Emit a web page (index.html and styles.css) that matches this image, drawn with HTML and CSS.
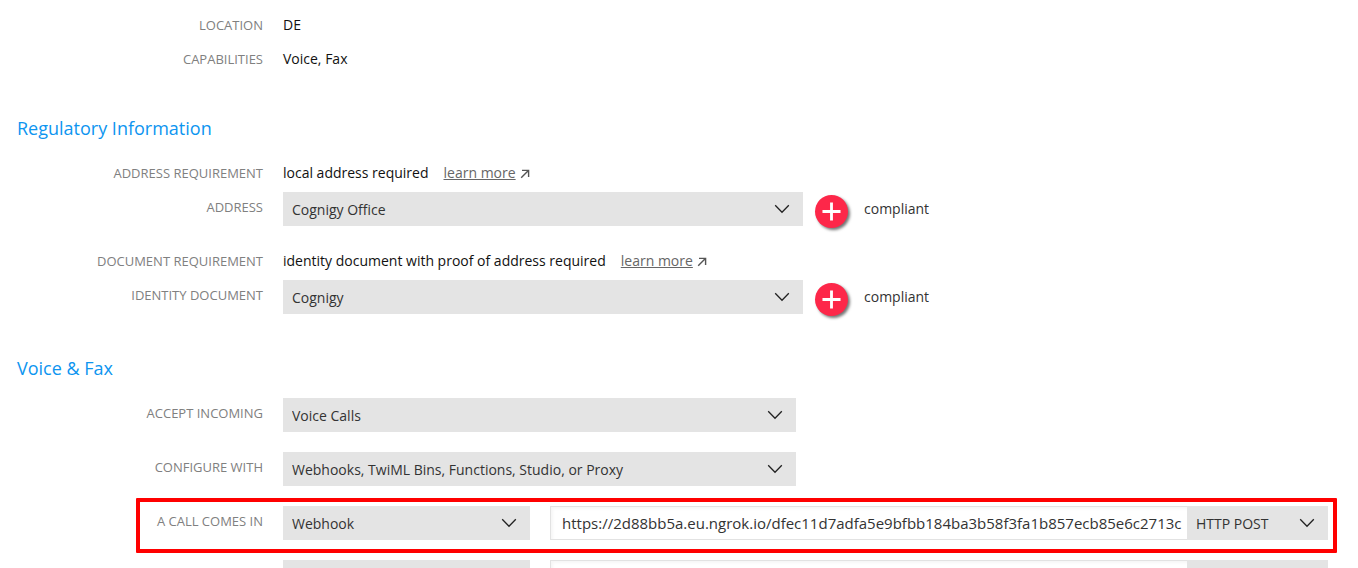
FILE: index.html
```html
<!DOCTYPE html>
<html lang="en">
<head>
<meta charset="utf-8">
<meta name="viewport" content="width=device-width, initial-scale=1">
<title>Phone number configuration</title>
<link rel="stylesheet" href="styles.css">
</head>
<body>
<svg class="sprite" aria-hidden="true">
  <symbol id="chevron" viewBox="0 0 16 10"><path d="M1.2 1.3 8 8.2 14.8 1.3" fill="none" stroke="#222" stroke-width="1.3"/></symbol>
  <symbol id="external" viewBox="0 0 10 10"><path d="M1.2 8.8 8.4 1.6M2 1.4H8.6V8" fill="none" stroke="#555" stroke-width="1.4"/></symbol>
  <symbol id="plus" viewBox="0 0 20 20"><path d="M10 .5V19.500M.5 10H19.500" fill="none" stroke="#fff" stroke-width="3"/></symbol>
</svg>
<main class="page">
  <section class="section">
    <div class="row"><span class="label">LOCATION</span><span class="value">DE</span></div>
    <div class="row row-after-text"><span class="label">CAPABILITIES</span><span class="value">Voice, Fax</span></div>
  </section>

  <section class="section">
    <h2 class="heading">Regulatory Information</h2>
    <div class="row">
      <span class="label">ADDRESS REQUIREMENT</span>
      <div class="value">local address required<a class="more" href="#">learn more</a><svg class="external"><use href="#external"/></svg></div>
    </div>
    <div class="row row-after-text">
      <label class="label" for="address">ADDRESS</label>
      <div class="line">
        <div class="picker picker-long"><select id="address"><option>Cognigy Office</option></select><svg class="chevron"><use href="#chevron"/></svg></div>
        <button class="add" type="button" aria-label="Add address"><svg class="plus"><use href="#plus"/></svg></button>
        <span class="status">compliant</span>
      </div>
    </div>
    <div class="row row-spaced">
      <span class="label">DOCUMENT REQUIREMENT</span>
      <div class="value">identity document with proof of address required<a class="more" href="#">learn more</a><svg class="external"><use href="#external"/></svg></div>
    </div>
    <div class="row row-after-text">
      <label class="label" for="identity">IDENTITY DOCUMENT</label>
      <div class="line">
        <div class="picker picker-long"><select id="identity"><option>Cognigy</option></select><svg class="chevron"><use href="#chevron"/></svg></div>
        <button class="add" type="button" aria-label="Add identity document"><svg class="plus"><use href="#plus"/></svg></button>
        <span class="status">compliant</span>
      </div>
    </div>
  </section>

  <section class="section">
    <h2 class="heading">Voice &amp; Fax</h2>
    <div class="row">
      <label class="label" for="accept">ACCEPT INCOMING</label>
      <div class="picker picker-medium"><select id="accept"><option>Voice Calls</option></select><svg class="chevron"><use href="#chevron"/></svg></div>
    </div>
    <div class="row row-spaced">
      <label class="label" for="configure">CONFIGURE WITH</label>
      <div class="picker picker-medium"><select id="configure"><option>Webhooks, TwiML Bins, Functions, Studio, or Proxy</option></select><svg class="chevron"><use href="#chevron"/></svg></div>
    </div>
    <div class="row row-spaced row-marked">
      <label class="label" for="call">A CALL COMES IN</label>
      <div class="hook">
        <div class="picker"><select id="call"><option>Webhook</option></select><svg class="chevron"><use href="#chevron"/></svg></div>
        <div class="endpoint">
          <input class="url" type="text" aria-label="Webhook URL" value="https://2d88bb5a.eu.ngrok.io/dfec11d7adfa5e9bfbb184ba3b58f3fa1b857ecb85e6c2713c">
          <div class="picker"><select aria-label="HTTP method"><option>HTTP POST</option></select><svg class="chevron"><use href="#chevron"/></svg></div>
        </div>
      </div>
    </div>
    <div class="row row-spaced">
      <span class="label"></span>
      <div class="hook">
        <div class="picker"><select aria-label="Fallback handler"><option></option></select></div>
        <div class="endpoint">
          <input class="url" type="text" aria-label="Fallback URL">
          <div class="picker"><select aria-label="Fallback HTTP method"><option></option></select></div>
        </div>
      </div>
    </div>
  </section>
</main>
</body>
</html>
```

FILE: styles.css
```css
* {
  box-sizing: border-box;
}

body {
  margin: 0;
  height: 100vh;
  overflow: hidden;
  background: #fff;
  color: #222;
  font-family: "Open Sans", "Noto Sans", sans-serif;
  font-size: 14px;
}

.sprite {
  display: none;
}

.page {
  padding: 10px 30px 20px 17px;
}

.section + .section {
  margin-top: 42px;
}

.heading {
  margin: 0 0 18px;
  color: #0d95f0;
  font-size: 18px;
  font-weight: 400;
  line-height: 24px;
}

.row {
  position: relative;
  display: grid;
  grid-template-columns: 246px minmax(0, 1fr);
  column-gap: 20px;
  align-items: start;
}

.row-after-text {
  margin-top: 4px;
}

.row-spaced {
  margin-top: 20px;
}

.label {
  color: #808080;
  font-size: 13px;
  line-height: 30px;
  text-align: right;
}

.value {
  height: 30px;
  color: #111;
  line-height: 30px;
}

.more {
  margin-left: 15px;
  color: #666;
  text-decoration: underline;
}

.external {
  width: 10px;
  height: 10px;
  margin-left: 4px;
  vertical-align: -1px;
}

.line {
  display: flex;
  align-items: flex-start;
  height: 34px;
}

.picker {
  position: relative;
  min-width: 0;
}

.picker-long {
  width: 520px;
}

.picker-medium {
  width: 513px;
  max-width: 100%;
}

.picker select {
  display: block;
  width: 100%;
  height: 34px;
  padding: 0 36px 0 9px;
  border: 0;
  border-radius: 0;
  appearance: none;
  background: #e4e4e4;
  color: #333;
  font: inherit;
}

.chevron {
  position: absolute;
  top: 12px;
  right: 13px;
  width: 16px;
  height: 10px;
  pointer-events: none;
}

.add {
  display: grid;
  place-items: center;
  flex: none;
  width: 33px;
  height: 33px;
  margin: 3px 16px 0 12px;
  padding: 0;
  border: 0;
  border-radius: 50%;
  background: #fd2749;
  box-shadow: 2px 2px 3px rgba(0, 0, 0, 0.55);
}

.plus {
  width: 19px;
  height: 19px;
}

.status {
  color: #333;
  line-height: 34px;
}

.hook {
  display: grid;
  grid-template-columns: 247px minmax(0, 1fr);
  column-gap: 20px;
}

.endpoint {
  display: grid;
  grid-template-columns: minmax(0, 1fr) 141px;
}

.url {
  width: 100%;
  height: 34px;
  padding: 0 4px 0 11px;
  border: 1px solid #e2e2e2;
  border-right: 0;
  border-radius: 0;
  background: #fff;
  box-shadow: inset 2px 2px 3px rgba(0, 0, 0, 0.04);
  color: #333;
  font: inherit;
  font-size: 15px;
}

.row-marked::after {
  content: "";
  position: absolute;
  inset: -8px -9px -13px 119px;
  border: 4px solid #f00;
  border-radius: 1px;
  pointer-events: none;
}
```
